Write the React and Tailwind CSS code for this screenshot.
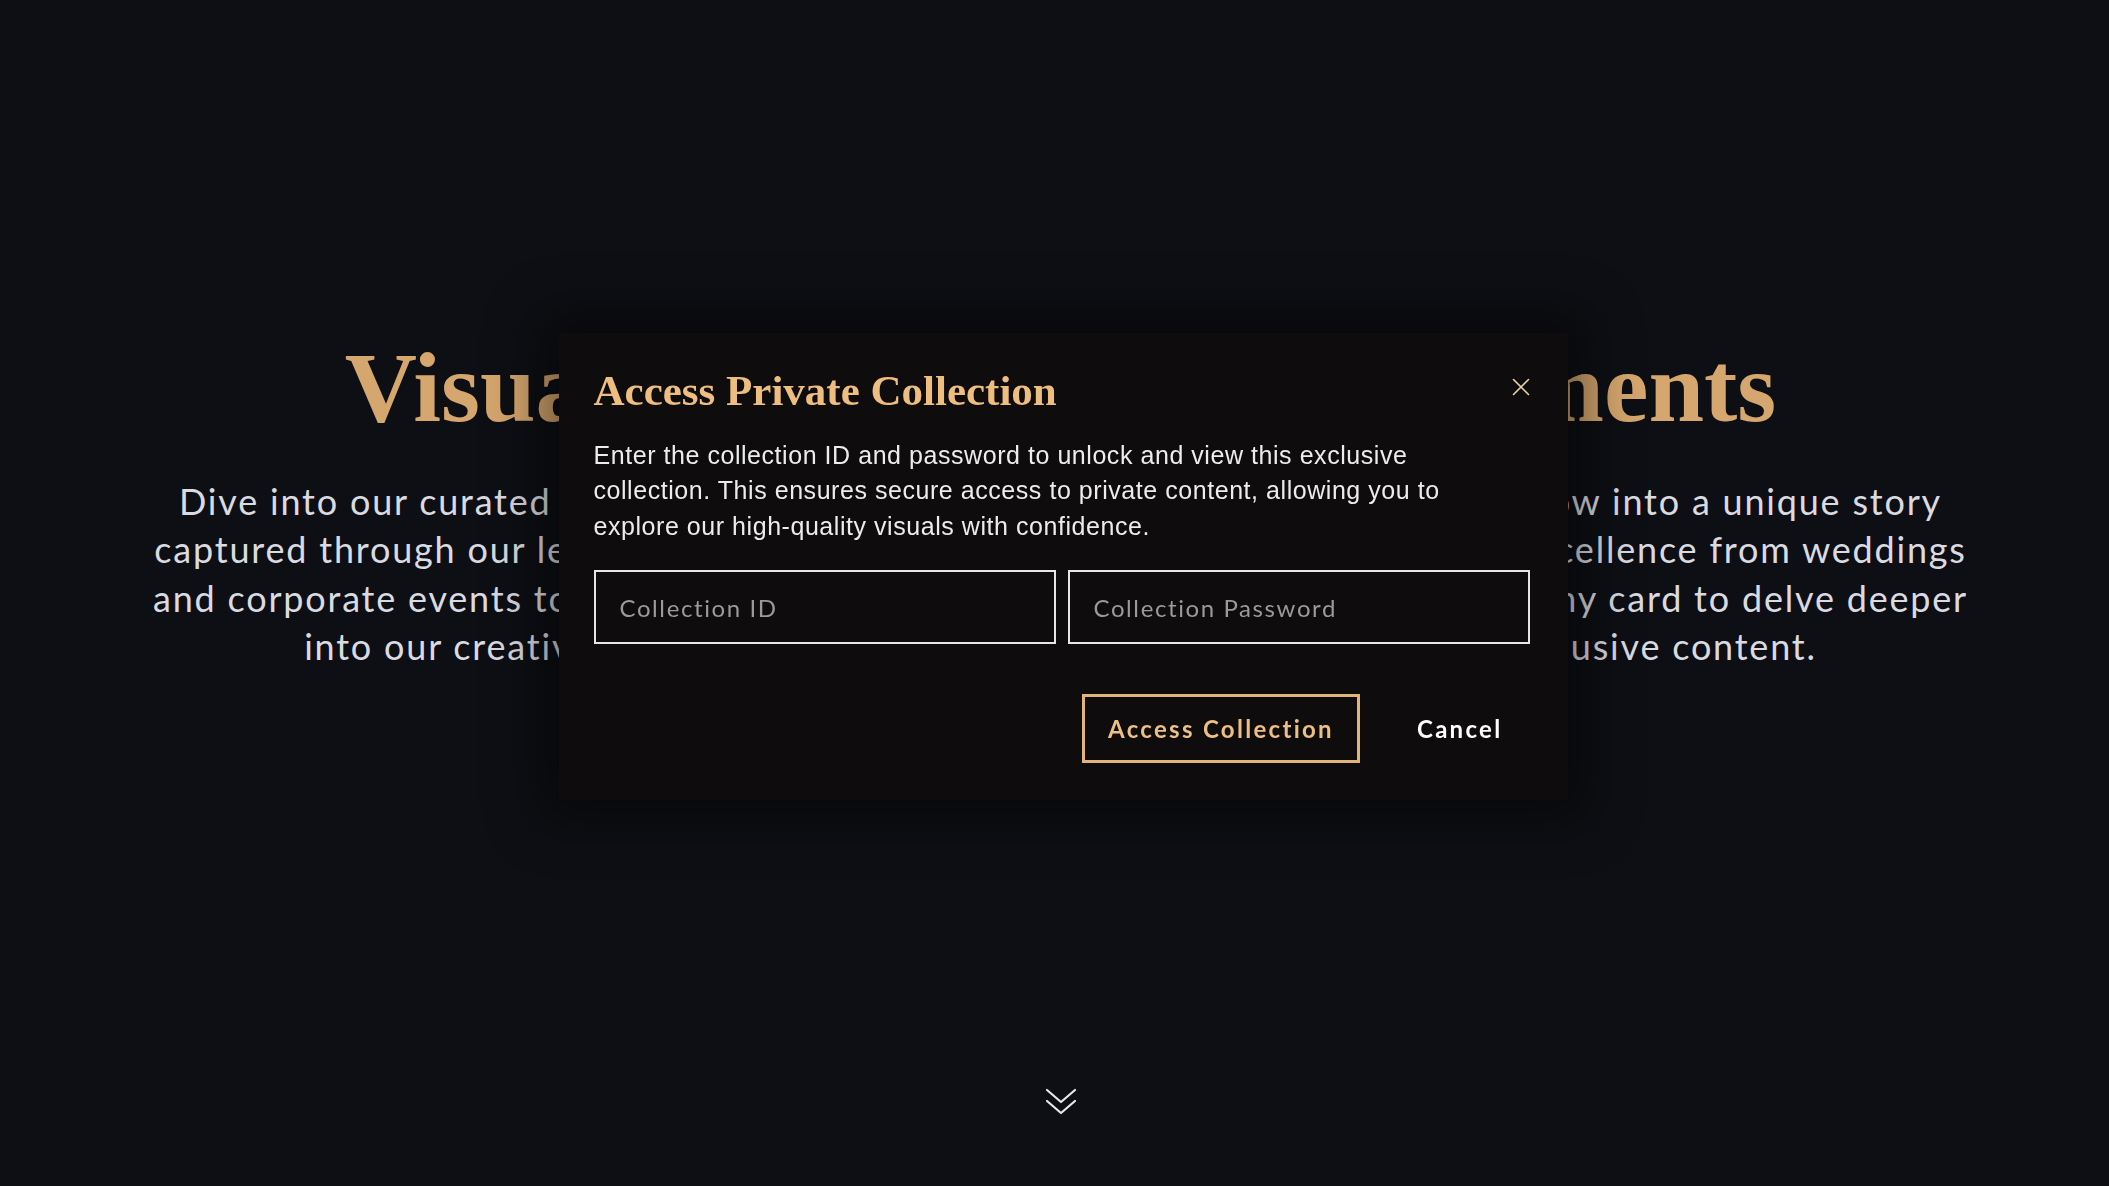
import React from "react";

const GOLD = "#d5a66d";

const introLines = [
  "Dive into our curated collections — where each and every gallery offers a window into a unique story",
  "captured through our lens. Experience our deep passion for detail and artistic excellence from weddings",
  "and corporate events to intimate family portraits and beyond — simply click on any card to delve deeper",
  "into our creative journey and to explore the stories behind our most exclusive content.",
];

function CloseIcon() {
  return (
    <svg width="32" height="32" viewBox="0 0 32 32" fill="none" stroke="currentColor" strokeWidth="1.6" strokeLinecap="round">
      <path d="M8.5 8.5 23.5 23.5M23.5 8.5 8.5 23.5" />
    </svg>
  );
}

function ScrollHint() {
  return (
    <svg width="34" height="30" viewBox="0 0 34 30" fill="none" stroke="currentColor" strokeWidth="2.2" strokeLinecap="round" strokeLinejoin="round">
      <path d="M3 3 17 15 31 3" />
      <path d="M3 14 17 26 31 14" />
    </svg>
  );
}

function AccessModal() {
  return (
    <div className="fixed inset-0 flex justify-center pt-[333px] pl-[17px]">
      <div className="relative w-[1009px] h-fit bg-[#0e0c0c] pl-[35px] pr-[38px] pt-8 pb-[37px] shadow-[0_0_50px_20px_rgba(0,0,0,0.45)]">
        <button className="absolute top-[38px] right-[31px] text-[#ead2ad]">
          <CloseIcon />
        </button>

        <h2
          className="text-[43px] leading-[1.2] font-bold text-[#eebd80]"
          style={{ fontFamily: '"Liberation Serif", serif' }}
        >
          Access Private Collection
        </h2>

        <p
          className="mt-[21px] text-[25px] leading-[35.5px] tracking-[0.55px] text-[#ececec]"
          style={{ fontFamily: '"Liberation Sans", Arial, sans-serif' }}
        >
          Enter the collection ID and password to unlock and view this exclusive
          <br />
          collection. This ensures secure access to private content, allowing you to
          <br />
          explore our high-quality visuals with confidence.
        </p>

        <div className="mt-[26px] grid grid-cols-2 gap-3" style={{ fontFamily: "Lato, sans-serif" }}>
          <input
            placeholder="Collection ID"
            className="h-[74px] border-2 border-[#e6e6e6] bg-transparent px-6 text-[24px] tracking-[1.6px] text-white placeholder:text-[#9a9a9a] outline-none"
          />
          <input
            type="password"
            placeholder="Collection Password"
            className="h-[74px] border-2 border-[#e6e6e6] bg-transparent px-6 text-[24px] tracking-[1.6px] text-white placeholder:text-[#9a9a9a] outline-none"
          />
        </div>

        <div className="mt-[50px] flex justify-end gap-[30px]" style={{ fontFamily: "Lato, sans-serif" }}>
          <button className="h-[69px] w-[278px] border-[3px] border-[#e2b47c] text-[24px] font-bold tracking-[2.3px] text-[#ecbf85]">
            Access Collection
          </button>
          <button className="h-[69px] px-[27px] text-[24px] font-bold tracking-[2.3px] text-white">
            Cancel
          </button>
        </div>
      </div>
    </div>
  );
}

export default function App() {
  return (
    <main className="relative min-h-screen w-full bg-[#0e0f14] overflow-hidden">
      <section className="flex min-h-screen flex-col items-center pl-[12px] pt-[335px]">
        <h1
          className="text-[100px] leading-[1.06] font-bold whitespace-nowrap"
          style={{ color: GOLD, fontFamily: '"Liberation Serif", serif' }}
        >
          Visual Stories, Timeless Moments
        </h1>

        <p
          className="mt-[36px] text-center text-[36px] leading-[48.4px] tracking-[0.05em] whitespace-nowrap text-[#dadbe1]"
          style={{ fontFamily: "Lato, sans-serif" }}
        >
          {introLines.map((line, i) => (
            <React.Fragment key={i}>
              {line}
              {i < introLines.length - 1 && <br />}
            </React.Fragment>
          ))}
        </p>

        <div className="mt-auto mb-[69px] text-[#e8e8ea]">
          <ScrollHint />
        </div>
      </section>

      <AccessModal />
    </main>
  );
}
